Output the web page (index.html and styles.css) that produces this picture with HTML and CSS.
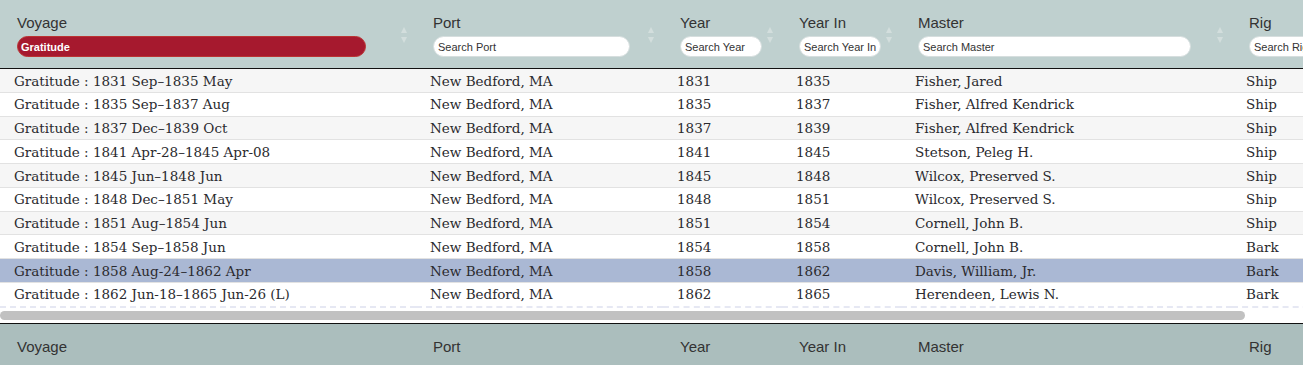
FILE: index.html
```html
<!DOCTYPE html>
<html>
<head>
<meta charset="utf-8">
<link rel="stylesheet" href="styles.css">
</head>
<body>
<div class="scroller">
<table class="grid">
  <colgroup>
    <col class="c-voyage"><col class="c-port"><col class="c-year"><col class="c-yearin"><col class="c-master"><col class="c-rig">
  </colgroup>
  <thead>
    <tr>
      <th><div class="hd"><span class="lbl">Voyage</span><input class="flt active w-voyage" value="Gratitude"></div><span class="sort"></span></th>
      <th><div class="hd"><span class="lbl">Port</span><input class="flt w-port" placeholder="Search Port"></div><span class="sort"></span></th>
      <th><div class="hd"><span class="lbl">Year</span><input class="flt w-year" placeholder="Search Year"></div><span class="sort"></span></th>
      <th><div class="hd"><span class="lbl">Year In</span><input class="flt w-year" placeholder="Search Year In"></div><span class="sort"></span></th>
      <th><div class="hd"><span class="lbl">Master</span><input class="flt w-master" placeholder="Search Master"></div><span class="sort"></span></th>
      <th><div class="hd"><span class="lbl">Rig</span><input class="flt w-rig" placeholder="Search Rig"></div></th>
    </tr>
  </thead>
  <tbody>
    <tr><td>Gratitude : 1831 Sep–1835 May</td><td>New Bedford, MA</td><td>1831</td><td>1835</td><td>Fisher, Jared</td><td>Ship</td></tr>
    <tr><td>Gratitude : 1835 Sep–1837 Aug</td><td>New Bedford, MA</td><td>1835</td><td>1837</td><td>Fisher, Alfred Kendrick</td><td>Ship</td></tr>
    <tr><td>Gratitude : 1837 Dec–1839 Oct</td><td>New Bedford, MA</td><td>1837</td><td>1839</td><td>Fisher, Alfred Kendrick</td><td>Ship</td></tr>
    <tr><td>Gratitude : 1841 Apr-28–1845 Apr-08</td><td>New Bedford, MA</td><td>1841</td><td>1845</td><td>Stetson, Peleg H.</td><td>Ship</td></tr>
    <tr><td>Gratitude : 1845 Jun–1848 Jun</td><td>New Bedford, MA</td><td>1845</td><td>1848</td><td>Wilcox, Preserved S.</td><td>Ship</td></tr>
    <tr><td>Gratitude : 1848 Dec–1851 May</td><td>New Bedford, MA</td><td>1848</td><td>1851</td><td>Wilcox, Preserved S.</td><td>Ship</td></tr>
    <tr><td>Gratitude : 1851 Aug–1854 Jun</td><td>New Bedford, MA</td><td>1851</td><td>1854</td><td>Cornell, John B.</td><td>Ship</td></tr>
    <tr><td>Gratitude : 1854 Sep–1858 Jun</td><td>New Bedford, MA</td><td>1854</td><td>1858</td><td>Cornell, John B.</td><td>Bark</td></tr>
    <tr class="sel"><td>Gratitude : 1858 Aug-24–1862 Apr</td><td>New Bedford, MA</td><td>1858</td><td>1862</td><td>Davis, William, Jr.</td><td>Bark</td></tr>
    <tr><td>Gratitude : 1862 Jun-18–1865 Jun-26 (L)</td><td>New Bedford, MA</td><td>1862</td><td>1865</td><td>Herendeen, Lewis N.</td><td>Bark</td></tr>
  </tbody>
</table>
<div class="hscroll"><div class="thumb"></div></div>
<table class="grid foot">
  <colgroup>
    <col class="c-voyage"><col class="c-port"><col class="c-year"><col class="c-yearin"><col class="c-master"><col class="c-rig">
  </colgroup>
  <tfoot>
    <tr><th>Voyage</th><th>Port</th><th>Year</th><th>Year In</th><th>Master</th><th>Rig</th></tr>
  </tfoot>
</table>
</div>
</body>
</html>
```
FILE: styles.css
```css
html, body { margin: 0; padding: 0; background: #fff; }
.scroller { width: 1303px; height: 365px; overflow: hidden; }
.grid { border-collapse: collapse; table-layout: fixed; width: 1420px; }
.c-voyage { width: 416px; }
.c-port { width: 247px; }
.c-year { width: 119px; }
.c-yearin { width: 119px; }
.c-master { width: 331px; }
.c-rig { width: 188px; }

thead tr { background: #bfd0cf; height: 68px; }
thead th { position: relative; padding: 0 0 0 17px; text-align: left; vertical-align: top; border-bottom: 1px solid #111; }
.hd { display: flex; flex-direction: column; align-items: flex-start; padding-top: 14px; gap: 4px; }
.lbl { font-family: "Liberation Sans", Arial, sans-serif; font-size: 15px; font-weight: normal; color: #333; line-height: 18px; }
.flt { box-sizing: border-box; height: 21px; border: 1px solid #d6dede; border-radius: 11px; background: #fff; font-family: "Liberation Sans", Arial, sans-serif; font-size: 11px; color: #333; padding: 0 3px 0 4px; outline: none; }
.flt::placeholder { color: #333; }
.flt.active { background: #a6192e; border-color: #b33; color: #fff; font-weight: bold; padding-left: 3px; }
.w-voyage { width: 349px; }
.w-port { width: 197px; }
.w-year { width: 82px; }
.w-master { width: 273px; }
.w-rig { width: 120px; }
.sort { position: absolute; right: 8px; top: 27px; width: 7px; height: 16px; }
.sort::before, .sort::after { content: ""; position: absolute; left: 0; border-left: 3.5px solid transparent; border-right: 3.5px solid transparent; }
.sort::before { top: 0; border-bottom: 6px solid #d3dedd; }
.sort::after { bottom: 0; border-top: 6px solid #d3dedd; }

tbody tr { background: #fff; }
tbody tr:nth-child(odd) { background: #f6f6f6; }
tbody tr.sel { background: #aab8d4; }
tbody td { font-family: "DejaVu Serif", Georgia, serif; font-size: 13.5px; color: #2a2a2e; padding: 1.5px 0 0 14px; border-top: 1px solid #e2e2e2; white-space: nowrap; overflow: hidden; line-height: 21.25px; }
tbody tr:first-child td { border-top: none; padding-top: 2px; }
tbody tr:last-child td { border-bottom: 2px dashed #e6e8f3; }

.hscroll { height: 15px; background: #fff; display: flex; align-items: center; }
.thumb { width: 1245px; height: 9px; background: #c1c1c1; border-radius: 5px; }

.foot tr { background: #abbebd; height: 48px; }
.foot th { border-top: 1px solid #111; text-align: left; padding: 0 0 1px 17px; font-family: "Liberation Sans", Arial, sans-serif; font-size: 15px; font-weight: normal; color: #333; }
```
